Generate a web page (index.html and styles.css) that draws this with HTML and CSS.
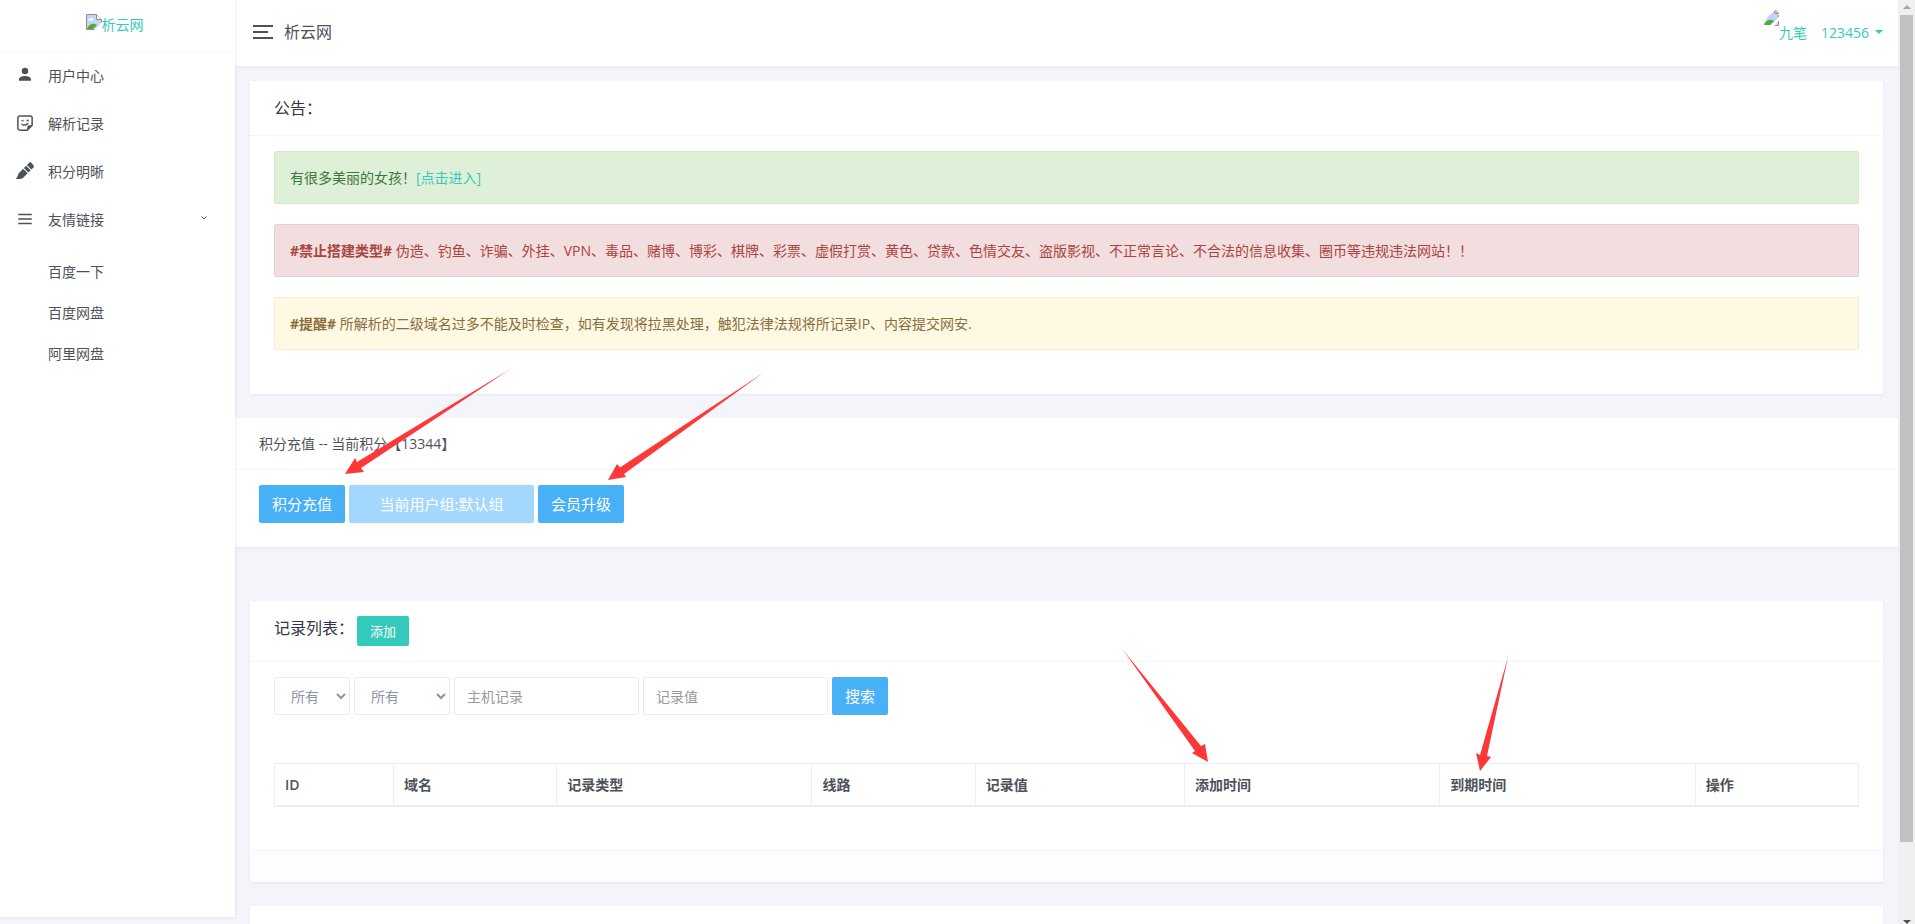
FILE: index.html
```
<!DOCTYPE html>
<html lang="zh-CN">
<head>
  <meta charset="UTF-8">
  <title>析云网</title>
  <link rel="stylesheet" href="styles.css">
</head>
<body>

  <!-- 侧边栏 -->
  <aside class="sidebar">
    <div class="logo">
      <a href="#">
        <svg class="broken" width="16" height="16" viewBox="0 0 16 16">
          <path d="M.5.5h10l5 5v10H.5z" fill="#c3d5f5" stroke="#8e8e8e"/>
          <path d="M10.500.5v5h5" fill="#fff" stroke="#8e8e8e"/>
          <path d="M2 6.500c0-2 2-2 2.500-1.500C5.500 3 8 4 7.500 6.500z" fill="#fff"/>
          <path d="M1 15c1-4 5-6 8-5l2 1-4 4z" fill="#53ab2f"/>
          <path d="M8 16l8-8v8z" fill="#fff"/>
        </svg><span>析云网</span>
      </a>
    </div>
    <nav class="nav">
      <a href="#">
        <svg width="18" height="18" viewBox="0 0 24 24"><path d="M12 11a4.300 4.300 0 1 0 0-8.600A4.300 4.300 0 0 0 12 11zM4 19.500h16v-2c0-2.800-4.500-4.200-8-4.200s-8 1.400-8 4.200z"/></svg>
        <span>用户中心</span>
      </a>
      <a href="#">
        <svg width="18" height="18" viewBox="0 0 24 24"><path d="M5 2.500h14a2.500 2.500 0 0 1 2.500 2.500v10L15 21.500H5A2.500 2.500 0 0 1 2.500 19V5A2.500 2.500 0 0 1 5 2.500z" fill="none" stroke="#4d5259" stroke-width="2"/><path d="M15 22v-4.500a2.500 2.500 0 0 1 2.500-2.500H22zM7 8.500l3-1v2H7zM14 7.500h3v2h-3zM7 12.500c3 2 7 1.500 9-1.500l.8 1.500c-2 4-7.800 4-9.800 1.500z"/></svg>
        <span>解析记录</span>
      </a>
      <a href="#">
        <svg width="18" height="18" viewBox="0 0 24 24"><path d="M23.500 4.500L20.500 1c-1-1-2.500-.5-3.500.5L14.500 4l6 6L23 7.500c1-1 1-2 .5-3zM13.500 5L10.500 8l6 6 3-3zM9.500 9L4 14.500c-1 1-1 2-1.500 3.500L0 22.500h5c3-.5 4-1 5-2L15.500 15z"/></svg>
        <span>积分明晰</span>
      </a>
      <a href="#">
        <svg width="18" height="18" viewBox="0 0 24 24"><path d="M3 5h18v2H3zM3 11h18v2H3zM3 17h18v2H3z"/></svg>
        <span>友情链接</span>
        <svg class="arrow" width="6" height="4" viewBox="0 0 6 4"><path d="M.5.5L3 3 5.500.5" fill="none" stroke="#4d5259"/></svg>
      </a>
      <div class="subnav">
        <a href="#">百度一下</a>
        <a href="#">百度网盘</a>
        <a href="#">阿里网盘</a>
      </div>
    </nav>
  </aside>

  <div class="main">
    <header class="topbar">
      <button class="toggler" aria-label="菜单"><i></i><i></i><i></i></button>
      <span class="site-name">析云网</span>
      <a class="user" href="#">
        <svg class="avatar" width="16" height="16" viewBox="0 0 16 16">
          <path d="M1 15C2 9 7 3 13 1l2 2v12z" fill="#c3d5f5"/>
          <path d="M11 1.500l2-1 2.500 3H12zM15.500 5v2M15.500 11v4.500H12" fill="none" stroke="#8e8e8e"/>
          <path d="M1 15c1-4 5-6 8-5l2 1-4 4z" fill="#53ab2f"/>
          <path d="M8 15l7-7v4l-3 3z" fill="#fff"/>
        </svg>
        <span class="nick">九笔</span>
        <span class="uid">123456</span>
        <i class="caret"></i>
      </a>
    </header>

    <main class="content">
      <!-- 公告 -->
      <section class="card">
        <div class="card-header"><h4>公告：</h4></div>
        <div class="card-body">
          <div class="alert success">有很多美丽的女孩！<a href="#">[点击进入]</a></div>
          <div class="alert danger"><b>#禁止搭建类型#</b> 伪造、钓鱼、诈骗、外挂、VPN、毒品、赌博、博彩、棋牌、彩票、虚假打赏、黄色、贷款、色情交友、盗版影视、不正常言论、不合法的信息收集、圈币等违规违法网站！！</div>
          <div class="alert warning"><b>#提醒#</b> 所解析的二级域名过多不能及时检查，如有发现将拉黑处理，触犯法律法规将所记录IP、内容提交网安.</div>
        </div>
      </section>

      <!-- 积分 -->
      <section class="card wide">
        <div class="card-header small">积分充值 -- 当前积分【13344】</div>
        <div class="card-body tools">
          <button class="btn">积分充值</button>
          <button class="btn group" disabled>当前用户组:默认组</button>
          <button class="btn">会员升级</button>
        </div>
      </section>

      <!-- 记录列表 -->
      <section class="card records">
        <div class="card-header"><h4>记录列表：</h4><button class="btn-add">添加</button></div>
        <div class="card-body">
          <form class="search">
            <select class="field" aria-label="域名"><option>所有</option></select>
            <select class="field type" aria-label="记录类型"><option>所有</option></select>
            <input class="field" type="text" placeholder="主机记录" aria-label="主机记录">
            <input class="field" type="text" placeholder="记录值" aria-label="记录值">
            <button class="btn" type="button">搜索</button>
          </form>
          <table class="table">
            <colgroup>
              <col class="c-id"><col class="c-sm"><col class="c-lg"><col class="c-sm"><col class="c-md"><col class="c-lg"><col class="c-lg"><col class="c-sm">
            </colgroup>
            <thead>
              <tr>
                <th>ID</th>
                <th>域名</th>
                <th>记录类型</th>
                <th>线路</th>
                <th>记录值</th>
                <th>添加时间</th>
                <th>到期时间</th>
                <th>操作</th>
              </tr>
            </thead>
          </table>
        </div>
        <div class="card-footer"></div>
      </section>

      <section class="card next"></section>
    </main>
  </div>

  <div class="scrollbar">
    <i class="up"></i>
    <div class="thumb"></div>
    <i class="down"></i>
  </div>

  <!-- 箭头标注 -->
  <svg class="marks" width="1915" height="924" viewBox="0 0 1915 924">
    <path d="M345 474L355 458 357 462 512 368 361 468 364 472z"/>
    <path d="M608 480L617 464 620 467.500 763 373 624 474 626 477z"/>
    <path d="M1208 762L1205 744 1201 746 1123 650 1195 751 1192 753z"/>
    <path d="M1480 771L1476 753 1480 755 1508 657 1487 756 1491 757z"/>
  </svg>

</body>
</html>
```
FILE: styles.css
```
* {
  box-sizing: border-box;
}

body {
  margin: 0;
  height: 100vh;
  display: flex;
  overflow: hidden;
  position: relative;
  background: #f4f5fa;
  color: #4d5259;
  font-family: "Open Sans", "Noto Sans CJK SC", sans-serif;
  font-size: 14px;
  line-height: 21px;
}

a {
  color: #33cabb;
  text-decoration: none;
}

button,
input,
select {
  font-family: inherit;
}

h4 {
  margin: 0;
  font-size: 16px;
  font-weight: 400;
  line-height: 22px;
  color: #313544;
}

/* sidebar */
.sidebar {
  width: 235px;
  flex: none;
  margin-bottom: 7px;
  background: #fff;
  box-shadow: 0 0 4px rgba(0, 0, 0, 0.1);
  z-index: 2;
}

.logo {
  height: 52px;
  padding: 14px 6px 0 0;
  border-bottom: 1px solid #f8f9fa;
}

.logo a {
  display: flex;
  justify-content: center;
}

.nav > a {
  display: flex;
  align-items: center;
  height: 48px;
  padding: 0 28px 2px 16px;
  color: #4d5259;
}

.nav svg {
  margin-right: 14px;
  fill: #4d5259;
}

.nav .arrow {
  margin: 0 0 2px auto;
}

.subnav {
  padding-top: 7px;
}

.subnav a {
  display: block;
  padding: 10px 0 10px 48px;
  color: #4d5259;
}

/* right side */
.main {
  flex: 1;
  min-width: 0;
  overflow: hidden;
}

.topbar {
  display: flex;
  align-items: center;
  height: 66px;
  padding: 0 15px 2px 18px;
  background: #fff;
  box-shadow: 0 1px 4px rgba(0, 0, 0, 0.06);
}

.toggler {
  display: flex;
  flex-direction: column;
  gap: 4px;
  width: 20px;
  margin-right: 11px;
  padding: 0;
  border: none;
  background: none;
}

.toggler i {
  width: 20px;
  height: 2px;
  background: #4d5259;
}

.toggler i:nth-child(2) {
  width: 15px;
}

.site-name {
  font-size: 16px;
}

.user {
  display: flex;
  align-items: center;
  margin-left: auto;
}

.avatar {
  margin-bottom: 28px;
}

.uid {
  margin: 0 6px 0 14px;
}

.caret {
  border: 4px solid transparent;
  border-top-color: #33cabb;
  border-bottom: 0;
}

.content {
  padding: 15px;
}

.card {
  margin-bottom: 24px;
  background: #fff;
  box-shadow: 0 1px 3px rgba(0, 0, 0, 0.06);
}

.card.wide {
  margin: 0 -15px 54px;
}

.card.next {
  height: 60px;
}

.card-header {
  display: flex;
  padding: 16px 24px;
  border-bottom: 1px solid #f4f5f6;
}

.card-header.small {
  padding: 15px 24px;
}

.card-body {
  padding: 15px 24px 24px;
}

.alert {
  margin-bottom: 20px;
  padding: 15px;
  border: 1px solid;
  border-radius: 2px;
}

.success {
  color: #3c763d;
  background: #dff0d8;
  border-color: #d6e9c6;
}

.danger {
  color: #a94442;
  background: #f2dede;
  border-color: #ebccd1;
}

.warning {
  color: #8a6d3b;
  background: #fff8e3;
  border-color: #faebcc;
}

.tools,
.search {
  display: flex;
  gap: 4px;
}

.btn {
  height: 38px;
  padding: 0 13px 2px;
  border: none;
  border-radius: 2px;
  background: #48b0f7;
  color: #fff;
  font-size: 15px;
}

.btn.group {
  width: 185px;
  background: #a3d7fb;
}

.btn-add {
  height: 30px;
  padding: 0 13px 1px;
  border: none;
  border-radius: 2px;
  background: #33cabb;
  color: #fff;
  font-size: 13px;
}

.records .card-header {
  padding: 15px 24px;
  gap: 3px;
}

.records h4 {
  line-height: 24px;
}

.field {
  width: 185px;
  height: 38px;
  padding: 0 12px;
  border: 1px solid #ebebeb;
  border-radius: 2px;
  background: #fff;
  color: #8b95a5;
  font-size: 14px;
}

select.field {
  width: 76px;
  padding: 0 0 0 12px;
}

select.type {
  width: 96px;
}

.field::placeholder {
  color: #999;
}

.table {
  width: 100%;
  margin: 48px 0 19px;
  border-collapse: collapse;
  table-layout: fixed;
}

.table th {
  padding: 10px;
  border: 1px solid #eceeef;
  border-bottom-width: 2px;
  text-align: left;
  font-weight: 600;
}

.c-id {
  width: 7.5%;
}

.c-sm {
  width: 10.3%;
}

.c-md {
  width: 13.2%;
}

.c-lg {
  width: 16.1%;
}

.card-footer {
  height: 32px;
  border-top: 1px solid #f4f5f6;
  background: #fcfdfe;
}

/* scrollbar */
.scrollbar {
  display: flex;
  flex-direction: column;
  align-items: center;
  width: 17px;
  flex: none;
  padding-top: 5px;
  background: #f0f0f0;
}

.up {
  border: 4px solid transparent;
  border-top: 0;
  border-bottom-color: #a3a3a3;
}

.thumb {
  width: 13px;
  height: 90%;
  margin-top: 6px;
  background: #c1c1c1;
}

.down {
  margin-top: auto;
  border: 4px solid transparent;
  border-top-color: #505050;
  border-bottom: 0;
}

.marks {
  position: absolute;
  top: 0;
  left: 0;
  z-index: 3;
  fill: #fc3838;
  pointer-events: none;
}
```
